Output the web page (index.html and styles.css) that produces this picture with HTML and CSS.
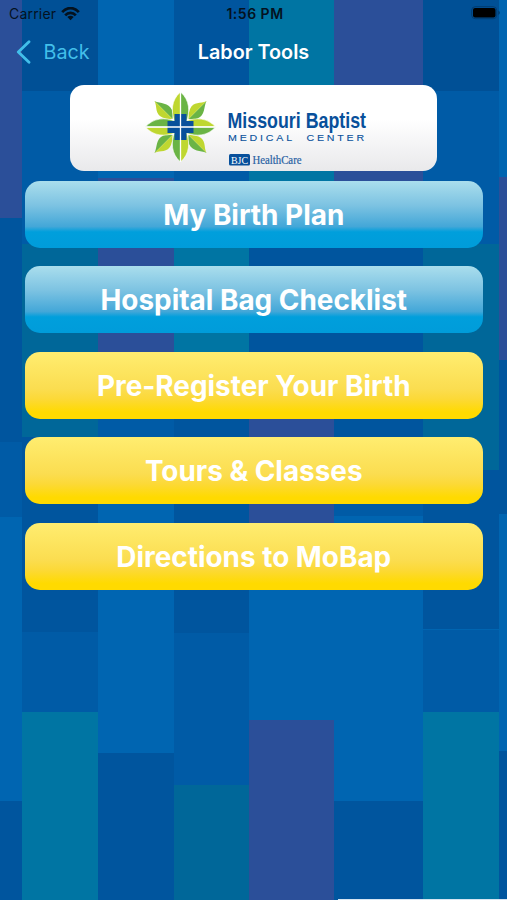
FILE: index.html
```html
<!DOCTYPE html>
<html lang="en">
<head>
<meta charset="utf-8">
<title>Labor Tools</title>
<link rel="stylesheet" href="styles.css">
</head>
<body>
<main class="screen">
  <header class="status">
    <div class="carrier">
      <span>Carrier</span>
      <svg width="19" height="14" viewBox="0 0 19 14" fill="none" stroke="#04121f" stroke-width="2.700">
        <path d="M1.2 5.2C6-.3 13-.3 17.8 5.2"/>
        <path d="M4.2 8.3c3-3.3 7.600-3.300 10.600 0"/>
        <path d="M9.500 13.300 6.300 10.100c1.800-1.700 4.600-1.700 6.400 0Z" fill="#04121f" stroke="none"/>
      </svg>
    </div>
    <span class="time">1:56 PM</span>
    <svg class="battery" width="30" height="14" viewBox="0 0 30 14">
      <rect x=".7" y=".7" width="25" height="12" rx="3.500" fill="none" stroke="#003c70" stroke-width="1"/>
      <rect x="2" y="2" width="22.500" height="9.500" rx="2" fill="#000"/>
      <path d="M27.300 4.600c2 .8 2 3.700 0 4.500Z" fill="#003c70"/>
    </svg>
  </header>
  <nav class="nav">
    <a class="back">
      <svg width="15" height="24" viewBox="0 0 15 24" fill="none" stroke="#42bfea" stroke-width="2.800" stroke-linecap="round" stroke-linejoin="round"><path d="M13 1.800 2.300 12 13 22.200"/></svg>
      <span>Back</span>
    </a>
    <h1>Labor Tools</h1>
  </nav>
  <section class="logo">
    <svg width="367" height="86" viewBox="70 85 367 86">
      <defs>
        <g id="petal">
          <path d="M0-35C-9.500-27-9.500-15-6-6L0 0Z" fill="#bfd730"/>
          <path d="M0-35C9.500-27 9.500-15 6-6L0 0Z" fill="#6ab445"/>
        </g>
        <g id="leaf">
          <path d="M-26-26C-20-23-12-25-8.500-17Q-7-13-8-8Z" fill="#6ab445"/>
          <path d="M-26-26C-23-20-26-13-18-9.500Q-13-7.500-8-8Z" fill="#bfd730"/>
        </g>
      </defs>
      <g transform="translate(180.500 127)">
        <use href="#leaf"/>
        <use href="#leaf" transform="rotate(90)"/>
        <use href="#leaf" transform="rotate(180)"/>
        <use href="#leaf" transform="rotate(270)"/>
        <g stroke="#fff" stroke-width=".6">
          <use href="#petal"/>
          <use href="#petal" transform="rotate(90)"/>
          <use href="#petal" transform="rotate(180)"/>
          <use href="#petal" transform="rotate(270)"/>
        </g>
        <path d="M-6-13H6V-6H13V6H6V13H-6V6H-13V-6H-6Z" fill="#08509b"/>
        <path d="M0-35V35M-35 0H35" stroke="#fff" stroke-width="1.300"/>
      </g>
      <text class="name" x="227.500" y="128" textLength="138.500" lengthAdjust="spacingAndGlyphs">Missouri Baptist</text>
      <text class="center" x="228" y="141.300" textLength="139" lengthAdjust="spacingAndGlyphs">MEDICAL&#160; CENTER</text>
      <rect x="229" y="154" width="21" height="11.500" rx="1.500" fill="#08509b"/>
      <text class="bjc" x="231" y="163.500" textLength="17" lengthAdjust="spacingAndGlyphs">BJC</text>
      <text class="health" x="252.500" y="163.500" textLength="49" lengthAdjust="spacingAndGlyphs">HealthCare</text>
    </svg>
  </section>
  <div class="menu">
    <a class="button blue"><span>My Birth Plan</span></a>
    <a class="button blue"><span>Hospital Bag Checklist</span></a>
    <a class="button yellow"><span>Pre-Register Your Birth</span></a>
    <a class="button yellow"><span>Tours &amp; Classes</span></a>
    <a class="button yellow"><span>Directions to MoBap</span></a>
  </div>
  <div class="home-edge"></div>
</main>
</body>
</html>
```
FILE: styles.css
```css
* { box-sizing: border-box; }

body { margin: 0; }

.screen {
  --navy: #00559e;
  --deep: #005096;
  --mid: #005ba6;
  --bright: #0065b1;
  --violet: #2b4f99;
  --teal: #0075a3;
  --sea: #006799;
  display: flex;
  flex-direction: column;
  width: 507px;
  height: 900px;
  overflow: hidden;
  font-family: Inter, "Liberation Sans", sans-serif;
  background-color: var(--bright);
  background-repeat: no-repeat;
  background-image:
    linear-gradient(var(--violet) 218px, var(--navy) 218px 442px, var(--mid) 442px 517px, var(--bright) 517px 801px, var(--navy) 801px),
    linear-gradient(var(--deep) 91px, var(--mid) 91px 244px, var(--sea) 244px 437px, var(--navy) 437px 632px, var(--mid) 632px 712px, var(--teal) 712px),
    linear-gradient(var(--bright) 178px, var(--violet) 178px 385px, var(--mid) 385px 470px, var(--bright) 470px 753px, var(--navy) 753px),
    linear-gradient(var(--navy) 91px, var(--mid) 91px 215px, var(--teal) 215px 385px, var(--navy) 385px 633px, var(--mid) 633px 785px, var(--sea) 785px),
    linear-gradient(var(--teal) 215px, var(--navy) 215px 385px, var(--violet) 385px 550px, var(--bright) 550px 720px, var(--violet) 720px),
    linear-gradient(var(--violet) 215px, var(--navy) 215px 470px, var(--mid) 470px 516px, var(--bright) 516px 801px, var(--navy) 801px),
    linear-gradient(var(--deep) 91px, var(--mid) 91px 244px, var(--sea) 244px 470px, var(--navy) 470px 629px, var(--bright) 629px 630px, var(--mid) 630px 712px, var(--teal) 712px),
    linear-gradient(var(--bright) 177px, var(--violet) 177px 360px, var(--navy) 360px 514px, var(--bright) 514px 751px, var(--navy) 751px);
  background-size: 22px 100%, 76px 100%, 76px 100%, 75px 100%, 85px 100%, 89px 100%, 76px 100%, 8px 100%;
  background-position: 0 0, 22px 0, 98px 0, 174px 0, 249px 0, 334px 0, 423px 0, 499px 0;
}

.status {
  display: grid;
  grid-template-columns: 1fr auto 1fr;
  align-items: center;
  height: 27px;
  padding: 0 6px 0 9px;
  color: #04121f;
  font-size: 14px;
}

.carrier { display: flex; align-items: center; gap: 5px; letter-spacing: 0.2px; }
.time { font-weight: 600; font-size: 14px; letter-spacing: 0.5px; }
.battery { justify-self: end; margin-top: -1px; }

.nav {
  display: grid;
  grid-template-columns: 1fr auto 1fr;
  align-items: center;
  height: 50px;
  padding: 0 16px;
}

.back { display: flex; align-items: center; gap: 12.5px; color: #42bfea; font-size: 19.7px; }
.nav h1 { margin: 0; color: #fff; font-size: 19.8px; font-weight: 600; }

.logo {
  width: 367px;
  height: 86px;
  margin: 8px 0 9.5px 70px;
  border-radius: 14px;
  background: linear-gradient(#fff 40%, #e9e9eb);
}
.logo svg { display: block; }
.name { font: bold 21.5px "Liberation Sans Narrow", "Liberation Sans", sans-serif; fill: #08509b; }
.center { font: 9.5px "Liberation Sans", sans-serif; letter-spacing: 2.5px; fill: #08509b; stroke: #08509b; stroke-width: 0.1px; }
.bjc { font: 11px "Liberation Serif", serif; fill: #fff; }
.health { font: 11.5px "Liberation Serif", serif; fill: #2861a3; stroke: #2861a3; stroke-width: 0.2px; }

.menu { display: flex; flex-direction: column; gap: 18.5px; padding: 0 24.5px 0 25px; }

.button {
  display: flex;
  align-items: center;
  justify-content: center;
  height: 67px;
  padding-top: 1px;
  border-radius: 15px;
  color: #fff;
  font-size: 27.9px;
  font-weight: 650;
  white-space: nowrap;
}
.blue { background: linear-gradient(#aadeed, #7dc3e2 36%, #43a7d8 68%, #009fdc 76%, #009cda); }
.yellow { background: linear-gradient(#ffed70, #fbdd50 55%, #fcd937 70%, #ffda00 90%); }

.home-edge { height: 1px; margin: auto 0 0 338px; background: #d5e5f2; }
```
